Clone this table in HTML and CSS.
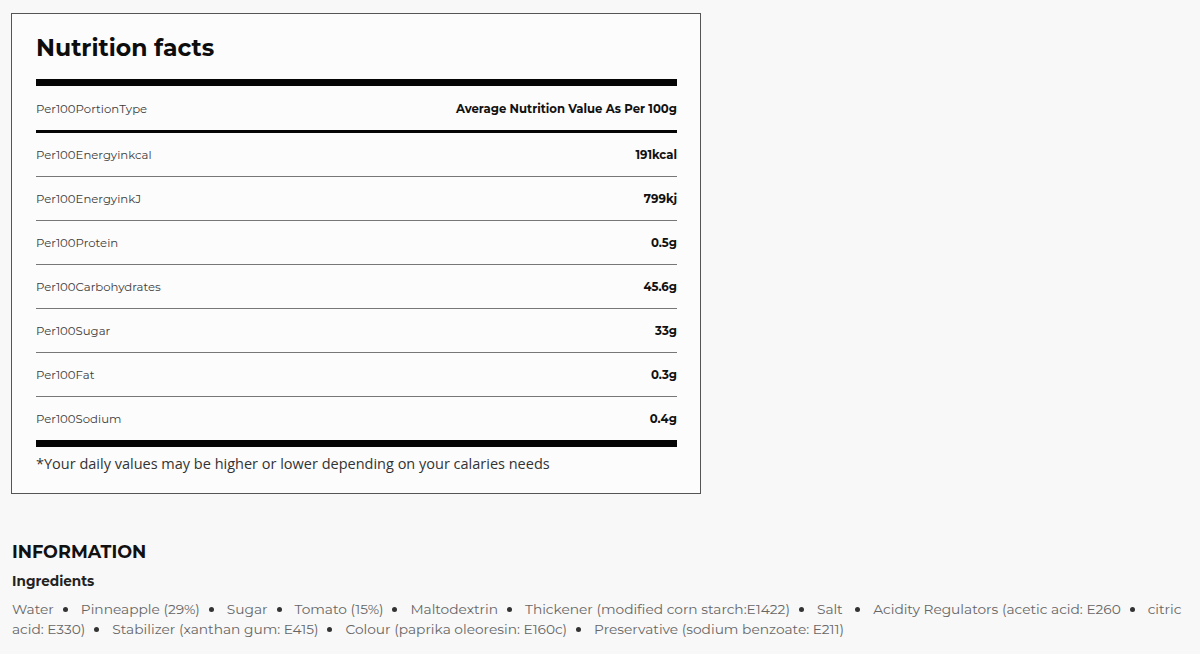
FILE: index.html
```html
<!DOCTYPE html>
<html lang="en">
<head>
<meta charset="utf-8">
<title>Nutrition facts</title>
<link rel="stylesheet" href="styles.css">
</head>
<body>
<section class="card">
  <h2 class="card-title">Nutrition facts</h2>
  <div class="bar"></div>
  <div class="row row-head">
    <span class="label">Per100PortionType</span>
    <span class="value">Average Nutrition Value As Per 100g</span>
  </div>
  <div class="rows">
    <div class="row"><span class="label">Per100Energyinkcal</span><span class="value">191kcal</span></div>
    <div class="row"><span class="label">Per100EnergyinkJ</span><span class="value">799kj</span></div>
    <div class="row"><span class="label">Per100Protein</span><span class="value">0.5g</span></div>
    <div class="row"><span class="label">Per100Carbohydrates</span><span class="value">45.6g</span></div>
    <div class="row"><span class="label">Per100Sugar</span><span class="value">33g</span></div>
    <div class="row"><span class="label">Per100Fat</span><span class="value">0.3g</span></div>
    <div class="row"><span class="label">Per100Sodium</span><span class="value">0.4g</span></div>
  </div>
  <div class="bar"></div>
  <p class="note">*Your daily values may be higher or lower depending on your calaries needs</p>
</section>

<section class="info">
  <h3 class="info-title">INFORMATION</h3>
  <h4 class="info-sub">Ingredients</h4>
  <p class="ingredients"><span>Water</span><i class="dot"></i><span>Pinneapple (29%)</span><i class="dot"></i><span>Sugar</span><i class="dot"></i><span>Tomato (15%)</span><i class="dot"></i><span>Maltodextrin</span><i class="dot"></i><span>Thickener (modified corn starch:E1422)</span><i class="dot"></i><span>Salt </span><i class="dot"></i><span>Acidity Regulators (acetic acid: E260</span><i class="dot"></i><span>citric </span><span>acid: E330)</span><i class="dot"></i><span>Stabilizer (xanthan gum: E415)</span><i class="dot"></i><span>Colour (paprika oleoresin: E160c)</span><i class="dot"></i><span>Preservative (sodium benzoate: E211)</span></p>
</section>
</body>
</html>
```
FILE: styles.css
```css
html, body {
  margin: 0;
  padding: 0;
  background: #f8f8f8;
}
body {
  font-family: "Montserrat", Inter, "Noto Sans", sans-serif;
  color: #111;
}
.card {
  box-sizing: border-box;
  width: 690px;
  margin: 13px 0 0 11px;
  padding: 19px 23px 19px 24px;
  border: 1px solid #555;
  background: #fcfcfc;
}
.card-title {
  margin: 0;
  font-size: 23.5px;
  line-height: 30px;
  font-weight: 700;
  color: #0d0d0d;
}
.bar {
  height: 7px;
  background: #050505;
}
.card-title + .bar {
  margin-top: 16px;
}
.row {
  display: flex;
  justify-content: space-between;
  align-items: center;
  height: 43px;
  font-size: 11.7px;
}
.row-head {
  box-sizing: border-box;
  height: 47px;
  padding-top: 1px;
  border-bottom: 3px solid #050505;
}
.rows .row {
  border-bottom: 1px solid #777;
}
.rows .row:last-child {
  border-bottom: none;
}
.label {
  color: #3d3d3d;
}
.value {
  font-weight: 700;
  color: #111;
}
.note {
  margin: 7px 0 0;
  font-family: "Open Sans", sans-serif;
  font-size: 14.5px;
  line-height: 20px;
  color: #333;
}
.info {
  padding: 0 11px 0 12px;
  margin-top: 47px;
}
.info-title {
  margin: 0;
  font-size: 17.6px;
  line-height: 22px;
  font-weight: 700;
  color: #111;
}
.info-sub {
  margin: 8px 0 0;
  font-size: 13.6px;
  line-height: 20px;
  font-weight: 700;
  color: #222;
}
.ingredients {
  margin: 8px 0 0;
  font-size: 13.75px;
  line-height: 20px;
  color: #666;
}
.dot {
  display: inline-block;
  width: 5px;
  height: 5px;
  border-radius: 50%;
  background: #333;
  margin: 0 13px 0 9px;
  vertical-align: middle;
  position: relative;
  top: -1px;
}
```
